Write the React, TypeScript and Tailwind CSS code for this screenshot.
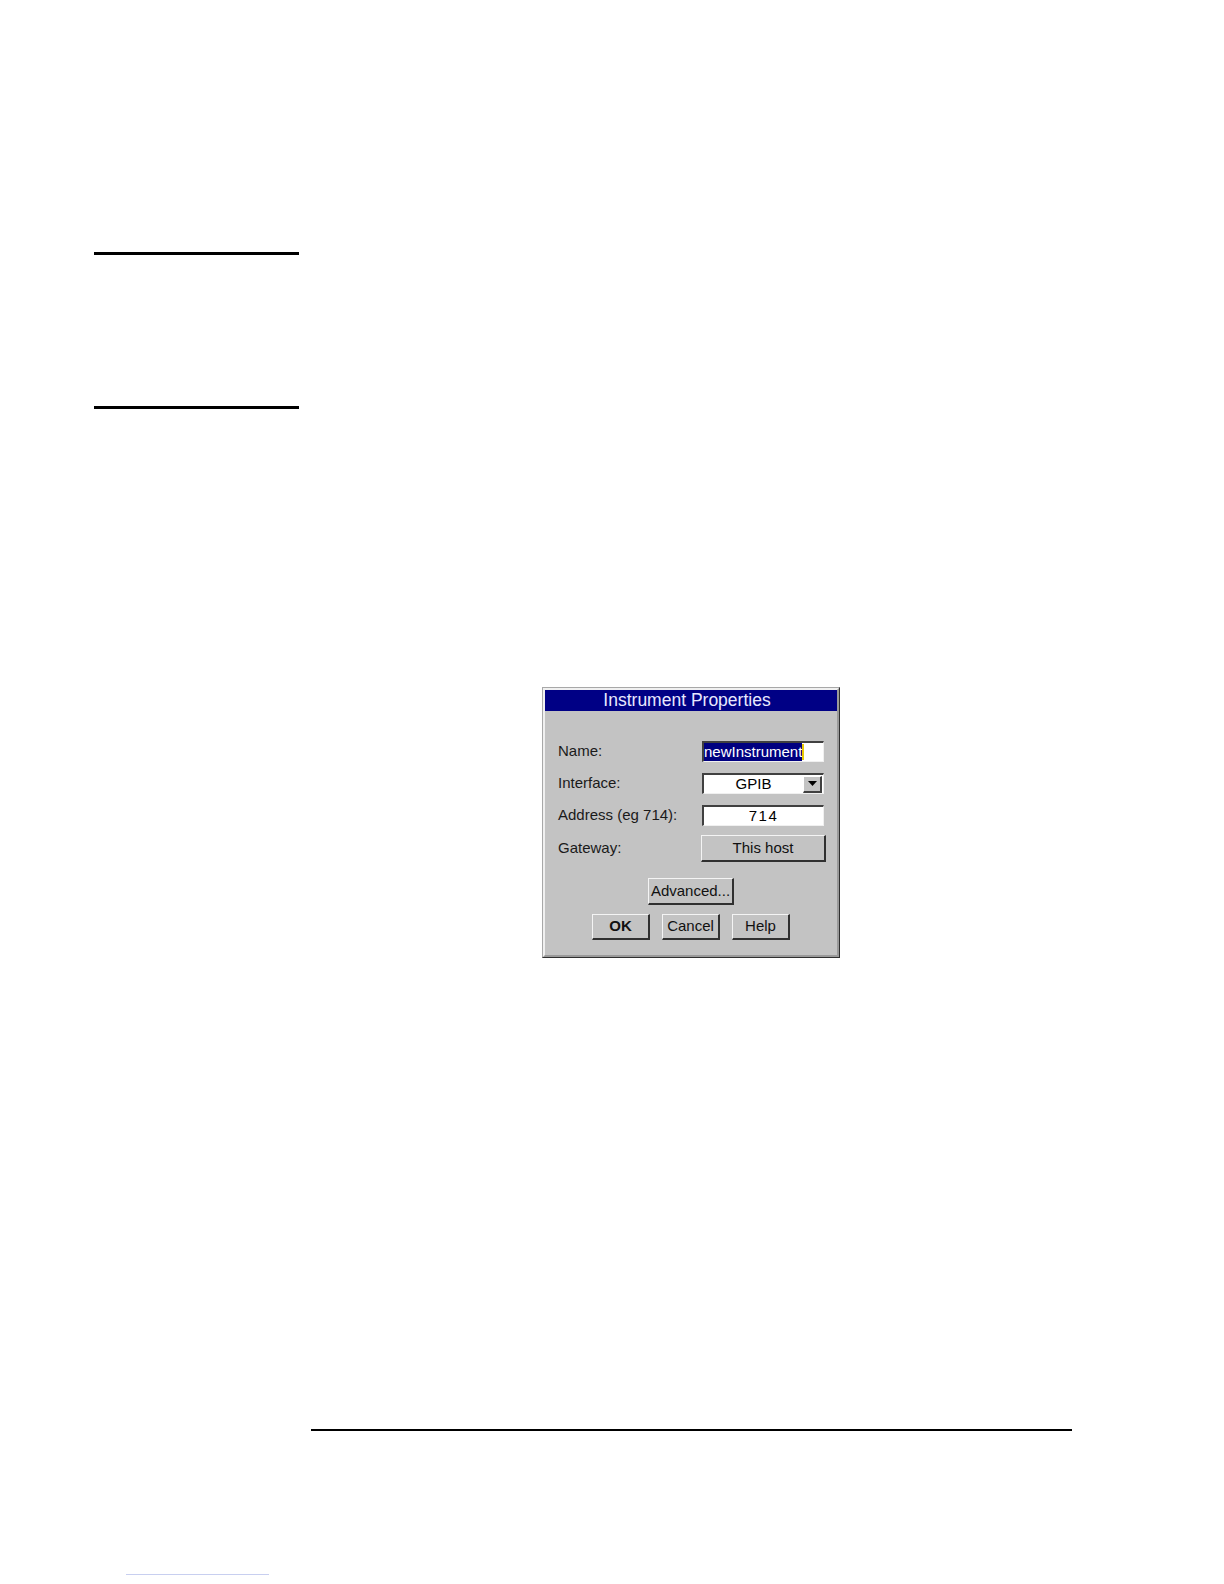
import React from "react";

const font = { fontFamily: '"Liberation Sans", Arial, sans-serif' };

function Sunken({ children, className = "" }: { children?: React.ReactNode; className?: string }) {
  return (
    <div className={"border-t-2 border-l-2 border-t-[#404040] border-l-[#404040] border-b border-r border-b-[#f0f0f0] border-r-[#f0f0f0] bg-white " + className}>
      {children}
    </div>
  );
}

function Raised({ children, className = "" }: { children?: React.ReactNode; className?: string }) {
  return (
    <div className={"flex items-center justify-center border-t border-l border-t-[#f4f4f4] border-l-[#f4f4f4] border-b-2 border-r-2 border-b-[#303030] border-r-[#303030] bg-[#c3c3c3] text-[15px] text-[#111]" + " " + className}>
      {children}
    </div>
  );
}

export default function App() {
  return (
    <div className="w-[1224px] h-[1584px] bg-white flex flex-col" style={font}>
      <div className="h-[252px] shrink-0" />
      <div className="ml-[94px] w-[205px] h-[3px] bg-black shrink-0" />
      <div className="h-[151px] shrink-0" />
      <div className="ml-[94px] w-[205px] h-[3px] bg-black shrink-0" />
      <div className="h-[278px] shrink-0" />
      {/* Dialog */}
      <div className="ml-[542px] w-[298px] h-[271px] shrink-0 border border-t-[#a8a8a8] border-l-[#a8a8a8] border-b-[#303030] border-r-[#303030] bg-[#c3c3c3]">
        <div className="w-full h-full border-2 border-t-[#f0f0f0] border-l-[#f0f0f0] border-b-[#9a9a9a] border-r-[#9a9a9a] flex flex-col">
          <div className="h-[21px] bg-[#000085] text-[#e8e8ff] text-[17.5px] leading-[21px] text-center pr-[8px]">Instrument Properties</div>
          <div className="flex flex-col pl-[13px] pt-[30px] text-[15px] text-[#1a1a1a]">
            <div className="flex items-center h-[21px]">
              <div className="w-[144px]">Name:</div>
              <Sunken className="w-[122px] h-[21px] flex items-center">
                <span className="bg-[#000080] text-white h-[18px] leading-[18px]">newInstrument</span>
                <span className="w-[2px] h-[16px] bg-[#e8c800]" />
              </Sunken>
            </div>
            <div className="flex items-center h-[21px] mt-[11px]">
              <div className="w-[144px]">Interface:</div>
              <Sunken className="w-[122px] h-[21px] flex items-center">
                <div className="flex-1 text-center text-black">GPIB</div>
                <div className="w-[19px] h-[17px] mr-[1px] flex items-center justify-center border-t border-l border-t-white border-l-white border-b-2 border-r-2 border-b-[#404040] border-r-[#404040] bg-[#c3c3c3]">
                  <svg width="9" height="5" viewBox="0 0 9 5"><path d="M0 0h9L4.5 5z" fill="#000" /></svg>
                </div>
              </Sunken>
            </div>
            <div className="flex items-center h-[21px] mt-[11px]">
              <div className="w-[144px]">Address (eg 714):</div>
              <Sunken className="w-[122px] h-[21px] flex items-center justify-center text-black tracking-[1.5px]">714</Sunken>
            </div>
            <div className="flex items-center h-[27px] mt-[9px]">
              <div className="w-[143px]">Gateway:</div>
              <Raised className="w-[125px] h-[27px]">This host</Raised>
            </div>
            <div className="flex justify-center mt-[16px] pr-[13px]">
              <Raised className="w-[86px] h-[27px]">Advanced...</Raised>
            </div>
            <div className="flex justify-center gap-[12px] mt-[9px] pr-[13px]">
              <Raised className="w-[58px] h-[26px] font-bold">OK</Raised>
              <Raised className="w-[58px] h-[26px]">Cancel</Raised>
              <Raised className="w-[58px] h-[26px]">Help</Raised>
            </div>
          </div>
        </div>
      </div>
      <div className="h-[471px] shrink-0" />
      <div className="ml-[311px] w-[761px] h-[2px] bg-black shrink-0" />
      <div className="h-[143px] shrink-0" />
      <div className="ml-[126px] w-[143px] h-[1px] bg-[#c8cff0] shrink-0" />
    </div>
  );
}
